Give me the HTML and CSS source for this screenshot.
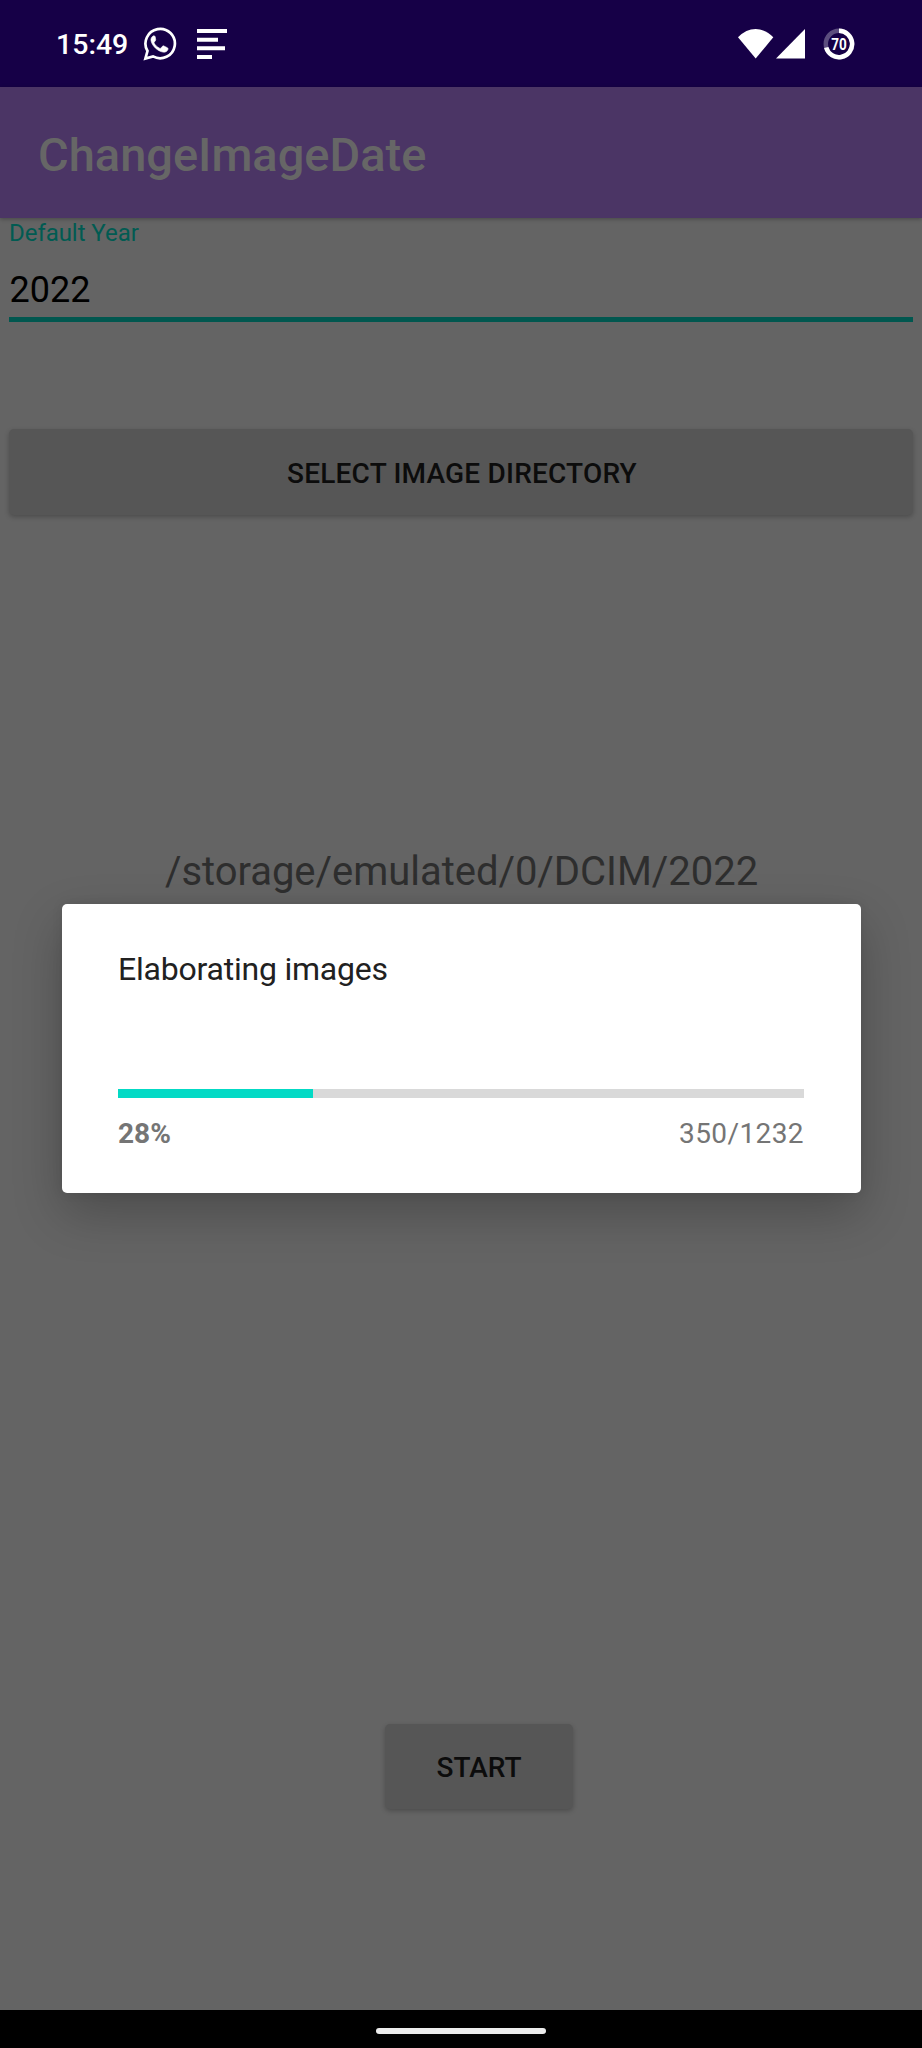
FILE: index.html
```html
<!DOCTYPE html>
<html lang="en">
<head>
<meta charset="utf-8">
<title>ChangeImageDate</title>
<link rel="stylesheet" href="styles.css">
</head>
<body>
<div class="screen">
  <header class="status">
    <span class="clock">15:49</span>
    <svg class="chat-icon" width="34" height="34" viewBox="0 0 34 34">
      <path d="M2.400 31.500 4.500 24A14.700 14.700 0 1 1 10 29.400Z" fill="none" stroke="#fff" stroke-width="2.700"/>
      <path d="M12.200 9.700c-.5-.9-1.300-1-2-.7-1.900 1-2.600 3-2.100 5 1.300 5.300 6.600 10.100 11.800 11.100 2.300.4 4.300-.6 5-2.500.3-1 .1-1.500-.6-1.900l-3.400-1.700c-.7-.3-1.100-.2-1.600.4l-1.300 1.600c-.4.500-.8.500-1.400.2-2.300-1-4.200-2.800-5.400-5-.3-.5-.2-.9.200-1.300l1.100-1.400c.3-.4.300-.8.100-1.300Z" fill="#fff" stroke="#fff" stroke-width=".6"/>
    </svg>
    <svg class="lines-icon" width="31" height="31" viewBox="0 0 31 31">
      <path d="M0 0h30v4H0zM0 8.700h21v4H0zM0 17.300h28v4H0zM0 26h15v4H0z" fill="#fff"/>
    </svg>
    <svg class="wifi-icon" width="36" height="30" viewBox="0 0 36 30">
      <path d="M0 8.300Q8 0 17.700 0T35.300 8.300L17.700 29.500Z" fill="#fff"/>
    </svg>
    <svg class="signal-icon" width="30" height="30" viewBox="0 0 30 30">
      <path d="M0 29.500 29 0V29.500Z" fill="#fff"/>
    </svg>
    <svg class="battery-icon" width="32" height="32" viewBox="0 0 32 32">
      <circle cx="16" cy="16" r="13.200" fill="none" stroke="#5c4d7e" stroke-width="4.500"/>
      <path d="M16 2.800A13.200 13.200 0 1 1 3.200 19.500" fill="none" stroke="#fff" stroke-width="4.500"/>
      <text class="battery-level" x="16" y="22" textLength="15.500" lengthAdjust="spacingAndGlyphs">70</text>
    </svg>
  </header>
  <div class="appbar"><h1 class="title">ChangeImageDate</h1></div>
  <main class="content">
    <div class="field">
      <label class="field-label">Default Year</label>
      <div class="field-value">2022</div>
    </div>
    <button class="btn btn-select">SELECT IMAGE DIRECTORY</button>
    <p class="path">/storage/emulated/0/DCIM/2022</p>
    <button class="btn btn-start">START</button>
  </main>
  <footer class="nav"><div class="handle"></div></footer>
  <section class="dialog">
    <p class="message">Elaborating images</p>
    <div class="track"><div class="fill" style="width:28.41%"></div></div>
    <div class="figures"><b class="percent">28%</b><span class="count">350/1232</span></div>
  </section>
</div>
</body>
</html>
```
FILE: styles.css
```css
* { box-sizing: border-box; margin: 0; padding: 0; }
body { background: #646464; font-family: Roboto, "Liberation Sans", sans-serif; }
.screen {
  position: relative;
  display: flex;
  flex-direction: column;
  width: 922px;
  height: 2048px;
  overflow: hidden;
}
.status {
  display: flex;
  align-items: center;
  height: 87px;
  padding: 0 67px 0 56px;
  background: #160047;
  color: #fff;
}
.clock { width: 87px; padding-top: 3px; font-size: 28.5px; font-weight: 500; line-height: 34px; }
.chat-icon { margin-right: 20px; }
.lines-icon { margin-top: 1px; }
.wifi-icon { margin-left: auto; }
.signal-icon { margin-left: 2px; }
.battery-icon { margin-left: 17px; }
.battery-level { fill: #fff; font-size: 17px; font-weight: 700; text-anchor: middle; }
.appbar {
  position: relative;
  display: flex;
  align-items: center;
  height: 131px;
  padding: 5px 38px 0;
  background: #4b3565;
  box-shadow: 0 1px 4px rgba(0, 0, 0, .3);
}
.title { color: #666; font-size: 47px; font-weight: 500; line-height: 56px; }
.content { display: flex; flex-direction: column; flex: 1; padding: 0 9px; }
.field { border-bottom: 5px solid #01574f; }
.field-label { display: block; padding-top: 1px; color: #015b52; font-size: 24px; line-height: 29px; letter-spacing: -.05px; }
.field-value { margin-top: 15px; padding-left: .5px; color: #000; font-size: 36px; line-height: 54px; }
.btn {
  border: 0;
  border-radius: 5px;
  background: #565656;
  box-shadow: 0 2px 5px rgba(0, 0, 0, .24);
  color: #0c0c0c;
  font: 500 28px/34px Roboto, "Liberation Sans", sans-serif;
}
.btn-select { height: 86px; margin-top: 107px; padding: 3px 0 0 2px; letter-spacing: .2px; }
.path { margin-top: 333px; padding-left: 1px; color: #2e2e2e; font-size: 40px; line-height: 48px; letter-spacing: -.03px; text-align: center; }
.btn-start { width: 188px; height: 85px; margin: 828px 0 0 376px; padding-top: 3px; }
.nav { display: flex; justify-content: center; height: 38px; padding-top: 18px; background: #000; }
.handle { width: 170px; height: 6px; border-radius: 3px; background: #ececec; }
.dialog {
  position: absolute;
  top: 903.5px;
  left: 61.5px;
  width: 799px;
  height: 289.5px;
  padding: 45px 56.5px 0;
  border-radius: 5px;
  background: #fff;
  box-shadow: 0 20px 50px rgba(0, 0, 0, .24), 0 0 12px rgba(0, 0, 0, .08);
}
.message { color: #212121; font-size: 32px; line-height: 40px; letter-spacing: -.22px; }
.track { height: 9px; margin-top: 100.5px; background: #d9d9d9; }
.fill { height: 9px; background: #03dac5; }
.figures { display: flex; justify-content: space-between; margin-top: 18.500px; color: #757575; font-size: 28px; line-height: 34px; }
.count { letter-spacing: .4px; }
```
